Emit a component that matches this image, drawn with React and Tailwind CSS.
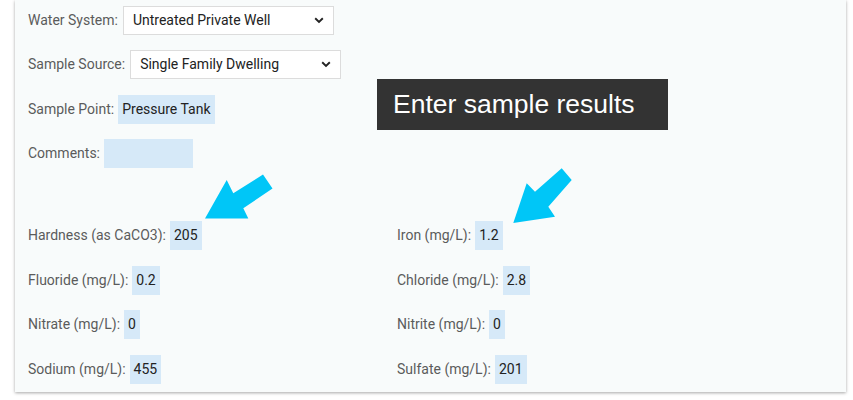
import React from "react";

const font = { fontFamily: "Roboto, 'Liberation Sans', sans-serif" };

function Chevron() {
  return (
    <svg width="10" height="7" viewBox="0 0 10 7" className="shrink-0">
      <path d="M1.2 1.3 L5 5 L8.8 1.3" fill="none" stroke="#222" strokeWidth="1.9" />
    </svg>
  );
}

function SelectRow({ label, value, width }) {
  return (
    <div className="flex items-center h-[29px]">
      <span className="text-[14px] text-[#5b5b5b] mr-[5px]">{label}</span>
      <div
        className="flex items-center justify-between h-[29px] border border-[#dcdcdc] bg-white pl-[9px] pr-[9px] text-[14px] text-[#222]"
        style={{ width }}
      >
        <span>{value}</span>
        <Chevron />
      </div>
    </div>
  );
}

function FieldRow({ label, value, boxClass = "" }) {
  return (
    <div className="flex items-center h-[29px]">
      <span className="text-[14px] text-[#5b5b5b] mr-[4px]">{label}</span>
      <div className={`flex items-center h-[29px] bg-[#d6e9f8] px-[4px] text-[14px] text-[#222] ${boxClass}`}>
        {value}
      </div>
    </div>
  );
}

export default function App() {
  return (
    <div className="relative w-[853px] h-[400px] bg-white overflow-hidden" style={font}>
      <div className="ml-[15px] w-[831px] h-[392px] bg-[#f8fbfb] shadow-[0_1px_3px_rgba(0,0,0,0.35)] pl-[13px] pt-[5.5px]">
        <div className="flex flex-col gap-[15.5px]">
          <SelectRow label="Water System:" value="Untreated Private Well" width="211px" />
          <SelectRow label="Sample Source:" value="Single Family Dwelling" width="211px" />
          <FieldRow label="Sample Point:" value="Pressure Tank" />
          <FieldRow label="Comments:" value="" boxClass="w-[89px]" />
        </div>
        <div className="grid grid-cols-[369px_1fr] gap-y-[15.5px] mt-[53px]">
          <FieldRow label="Hardness (as CaCO3):" value="205" />
          <FieldRow label="Iron (mg/L):" value="1.2" />
          <FieldRow label="Fluoride (mg/L):" value="0.2" />
          <FieldRow label="Chloride (mg/L):" value="2.8" />
          <FieldRow label="Nitrate (mg/L):" value="0" />
          <FieldRow label="Nitrite (mg/L):" value="0" />
          <FieldRow label="Sodium (mg/L):" value="455" />
          <FieldRow label="Sulfate (mg/L):" value="201" />
        </div>
      </div>

      <div
        className="absolute left-[377px] top-[79px] w-[291px] h-[51px] bg-[#333333] text-white text-[26.5px] pl-[16px] flex items-center"
        style={{ fontFamily: "'Liberation Sans', Arial, sans-serif" }}
      >
        Enter sample results
      </div>

      <svg className="absolute inset-0 pointer-events-none" width="853" height="400" viewBox="0 0 853 400">
        <polygon
          fill="#00c6f7"
          points="205,218.5 226.7,180 233.3,193.3 263,174.5 272.5,188.5 243.3,208.3 248.3,218.5"
        />
        <polygon
          fill="#00c6f7"
          points="513.3,223 526.7,183.3 535,191.7 561.7,168.3 571.7,180 548.3,206.7 555,216.7"
        />
      </svg>
    </div>
  );
}
